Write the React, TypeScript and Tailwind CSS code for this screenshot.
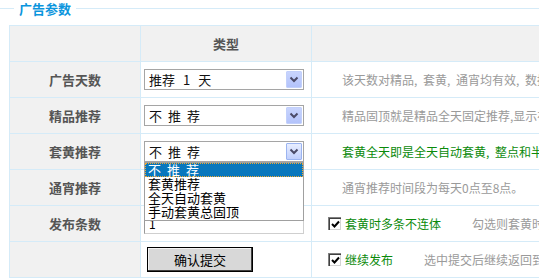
import React from "react";

const FONT = { fontFamily: '"Noto Sans CJK SC", "Noto Sans", sans-serif' };

function Chevron({ active }: { active?: boolean }) {
  return (
    <div
      className={
        "flex h-[17px] w-[16px] items-center justify-center rounded-[1px] border " +
        (active
          ? "border-[#9bb4f0] bg-gradient-to-b from-[#e8eeff] to-[#c0cffc]"
          : "border-[#c2d0fb] bg-gradient-to-b from-[#c8d4fd] to-[#b3c3fb]")
      }
    >
      <svg width="10" height="7" viewBox="0 0 10 7">
        <path d="M1.5 1.5 L5 5 L8.5 1.5" fill="none" stroke="#4b4b68" strokeWidth="2" />
      </svg>
    </div>
  );
}

function Select({ children, active }: { children: React.ReactNode; active?: boolean }) {
  return (
    <div className="flex h-[21px] w-[160px] items-center justify-between border border-[#a5a5a5] bg-white pl-[4px] pr-[1px]">
      <div className="text-[13px] leading-[16px] text-[#111]">{children}</div>
      <Chevron active={active} />
    </div>
  );
}

function Check() {
  return (
    <div className="flex h-[13px] w-[13px] items-center justify-center border-l border-t border-[#808080] bg-white shadow-[inset_1px_1px_0_#404040,inset_-1px_-1px_0_#d4d4d4]">
      <svg width="9" height="9" viewBox="0 0 9 9">
        <path d="M1 4 L3.5 6.5 L8 1.5" fill="none" stroke="#000" strokeWidth="2" />
      </svg>
    </div>
  );
}

function C() {
  return <span className="inline-block w-[9px]">,</span>;
}

const spaced = "tracking-[6px]";

export default function App() {
  const label = "flex items-center justify-center border-b border-r border-[#d5ebf8] bg-[#f1f1f1] text-[13px] font-bold text-[#555]";
  const cell2 = "flex items-center border-b border-r border-[#d5ebf8] bg-white pl-[3px]";
  const cell3 = "flex items-center overflow-hidden whitespace-nowrap border-b border-r border-[#d5ebf8] bg-white text-[12px]";

  return (
    <div className="h-[278px] w-[539px] overflow-hidden bg-white" style={FONT}>
      <div className="flex h-[17px] items-center">
        <div className="h-0 w-[14px] border-t border-[#d5ebf8]" />
        <span className="px-[5px] text-[13px] font-bold leading-[16px] text-[#0b95dd]">广告参数</span>
        <div className="h-0 flex-1 border-t border-[#d5ebf8]" />
      </div>

      <div className="ml-[9px] mt-[8px] grid w-[800px] grid-cols-[131px_171px_498px] grid-rows-[36px_36px_36px_36px_36px_36px_36px] border-l border-t border-[#d5ebf8]">
        {/* header */}
        <div className={label} />
        <div className="flex items-center justify-center border-b border-r border-[#d5ebf8] bg-[#f1f1f1] text-[13px] font-bold text-[#555]">类型</div>
        <div className="border-b border-r border-[#d5ebf8] bg-[#f1f1f1]" />

        {/* row 1 */}
        <div className={label}>广告天数</div>
        <div className={cell2}>
          <Select>
            <span>推荐</span>
            <span className="mx-[8px]">1</span>
            <span>天</span>
          </Select>
        </div>
        <div className={cell3 + " pl-[30px] text-[#9a9a9a]"}>
          <span>该天数对精品</span><C /><span>套黄</span><C /><span>通宵均有效</span><C /><span>数据将在到期后自动清除。</span>
        </div>

        {/* row 2 */}
        <div className={label}>精品推荐</div>
        <div className={cell2}>
          <Select>
            <span className={spaced}>不推荐</span>
          </Select>
        </div>
        <div className={cell3 + " pl-[30px] text-[#9a9a9a]"}>精品固顶就是精品全天固定推荐,显示在最前面。</div>

        {/* row 3 */}
        <div className={label}>套黄推荐</div>
        <div className={cell2}>
          <div className="relative z-10">
            <Select active>
              <span className={spaced}>不推荐</span>
            </Select>
            <div className="absolute left-0 top-full w-[160px] border border-[#a0a0a0] bg-white pb-[1px] text-[13px] leading-[14px] text-black">
              <div className="h-[14px] bg-[#0877bd] pl-[3px] text-white outline outline-1 -outline-offset-1 outline-dotted outline-[#f0a830]">
                <span className={spaced}>不推荐</span>
              </div>
              <div className="h-[14px] pl-[3px]">套黄推荐</div>
              <div className="h-[14px] pl-[3px]">全天自动套黄</div>
              <div className="h-[14px] pl-[3px]">手动套黄总固顶</div>
            </div>
          </div>
        </div>
        <div className={cell3 + " pl-[30px] text-[#0a8a0a]"}>
          <span>套黄全天即是全天自动套黄</span><C /><span>整点和半点都会自动套黄。</span>
        </div>

        {/* row 4 */}
        <div className={label}>通宵推荐</div>
        <div className={cell2} />
        <div className={cell3 + " pl-[30px] text-[#9a9a9a]"}>通宵推荐时间段为每天0点至8点。</div>

        {/* row 5 */}
        <div className={label}>发布条数</div>
        <div className={cell2}>
          <div className="flex h-[20px] w-[160px] items-center border border-b-[#cfcfcf] border-l-[#9a9a9a] border-r-[#cfcfcf] border-t-[#9a9a9a] bg-white pl-[4px] text-[12px] leading-[14px]">1</div>
        </div>
        <div className={cell3 + " pl-[16px]"}>
          <Check />
          <span className="ml-[4px] text-[#0a8a0a]">套黄时多条不连体</span>
          <span className="ml-[31px] text-[#9a9a9a]">勾选则套黄时多条信息不连在一起。</span>
        </div>

        {/* row 6 */}
        <div className={label} />
        <div className={cell2 + " pl-[6px]"}>
          <button className="flex h-[25px] w-[106px] items-center justify-center border border-black bg-[#d8d8d8] text-[13px] text-black shadow-[inset_-1px_-1px_0_#404040,inset_1px_1px_0_#f4f4f4]">
            确认提交
          </button>
        </div>
        <div className={cell3 + " pl-[16px]"}>
          <Check />
          <span className="ml-[4px] text-[#0a8a0a]">继续发布</span>
          <span className="ml-[31px] text-[#9a9a9a]">选中提交后继续返回到发布页面。</span>
        </div>
      </div>
    </div>
  );
}
